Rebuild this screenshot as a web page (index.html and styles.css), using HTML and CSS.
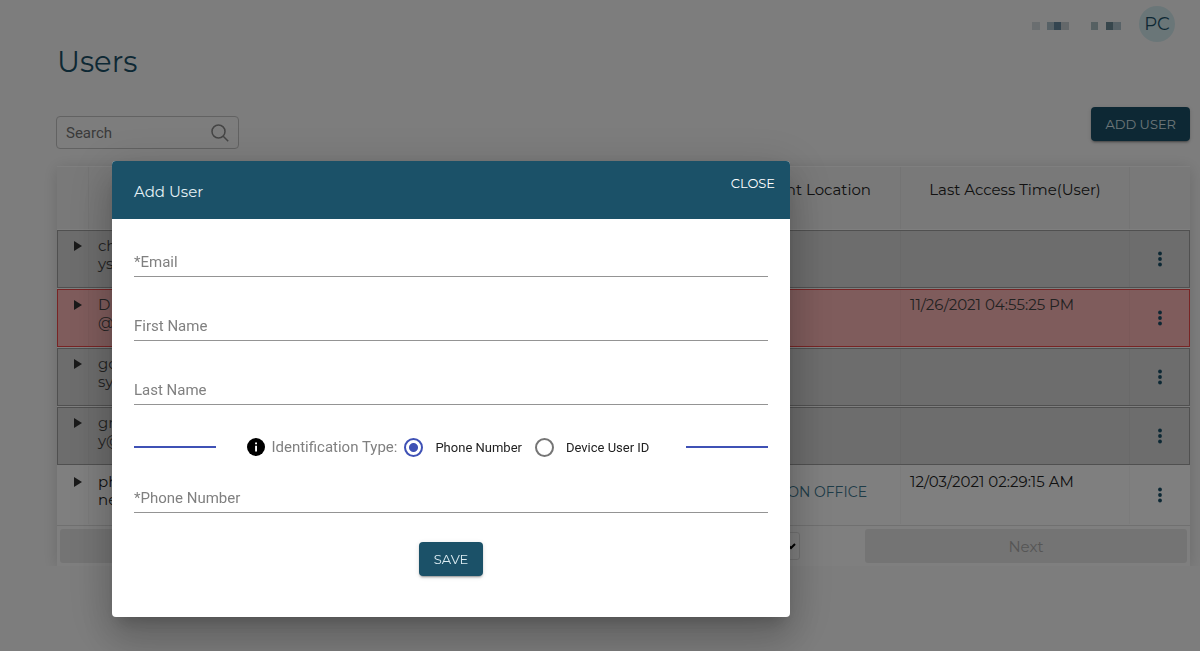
FILE: index.html
```
<!DOCTYPE html>
<html lang="en">
<head>
<meta charset="utf-8">
<title>Users</title>
<link rel="stylesheet" href="styles.css">
</head>
<body>

<div class="page">
  <div class="topbar">
    <svg class="username" width="89" height="8" viewBox="0 0 89 8">
      <rect x="0" width="8" height="8" fill="#d4dce0"/>
      <rect x="15" width="7" height="8" fill="#aec2cc"/>
      <rect x="22" width="7" height="8" fill="#688aa0"/>
      <rect x="29" width="8" height="8" fill="#c8d0d4"/>
      <rect x="59" width="7" height="8" fill="#acc0c4"/>
      <rect x="74" width="7" height="8" fill="#6e8c98"/>
      <rect x="81" width="8" height="8" fill="#b0c4ce"/>
    </svg>
    <span class="avatar">PC</span>
  </div>

  <h1>Users</h1>

  <div class="toolbar">
    <div class="search">
      <input type="text" placeholder="Search" aria-label="Search">
      <svg width="18" height="18" viewBox="0 0 18 18" fill="none" stroke="#8a8a8a" stroke-width="1.5">
        <circle cx="7.5" cy="7.5" r="6.5"/>
        <path d="M12.2 12.2L17.2 17.2"/>
      </svg>
    </div>
    <button class="btn">ADD USER</button>
  </div>

  <div class="grid">
    <table>
      <thead>
        <tr>
          <th class="col-expand"></th>
          <th class="col-email"></th>
          <th class="col-location">nt Location</th>
          <th class="col-time">Last Access Time(User)</th>
          <th class="col-menu"></th>
        </tr>
      </thead>
      <tbody>
        <tr class="inactive">
          <td><span class="arrow"></span></td>
          <td>ch<br>ys</td>
          <td></td>
          <td></td>
          <td class="menu"><button aria-label="Actions"><svg width="4" height="16" viewBox="0 0 4 16"><circle cx="2" cy="2.5" r="1.9"/><circle cx="2" cy="8" r="1.9"/><circle cx="2" cy="13.5" r="1.9"/></svg></button></td>
        </tr>
        <tr class="inactive locked">
          <td><span class="arrow"></span></td>
          <td>D<br>@</td>
          <td></td>
          <td>11/26/2021 04:55:25 PM</td>
          <td class="menu"><button aria-label="Actions"><svg width="4" height="16" viewBox="0 0 4 16"><circle cx="2" cy="2.5" r="1.9"/><circle cx="2" cy="8" r="1.9"/><circle cx="2" cy="13.5" r="1.9"/></svg></button></td>
        </tr>
        <tr class="inactive">
          <td><span class="arrow"></span></td>
          <td>go<br>sy</td>
          <td></td>
          <td></td>
          <td class="menu"><button aria-label="Actions"><svg width="4" height="16" viewBox="0 0 4 16"><circle cx="2" cy="2.5" r="1.9"/><circle cx="2" cy="8" r="1.9"/><circle cx="2" cy="13.5" r="1.9"/></svg></button></td>
        </tr>
        <tr class="inactive">
          <td><span class="arrow"></span></td>
          <td>gr<br>y@</td>
          <td></td>
          <td></td>
          <td class="menu"><button aria-label="Actions"><svg width="4" height="16" viewBox="0 0 4 16"><circle cx="2" cy="2.5" r="1.9"/><circle cx="2" cy="8" r="1.9"/><circle cx="2" cy="13.5" r="1.9"/></svg></button></td>
        </tr>
        <tr>
          <td><span class="arrow"></span></td>
          <td>ph<br>ne</td>
          <td class="location"><a href="#">TON OFFICE</a></td>
          <td>12/03/2021 02:29:15 AM</td>
          <td class="menu"><button aria-label="Actions"><svg width="4" height="16" viewBox="0 0 4 16"><circle cx="2" cy="2.5" r="1.9"/><circle cx="2" cy="8" r="1.9"/><circle cx="2" cy="13.5" r="1.9"/></svg></button></td>
        </tr>
      </tbody>
    </table>
    <div class="pagination">
      <button disabled>Previous</button>
      <div class="page-size">
        <select aria-label="Rows per page">
          <option>5 rows</option>
        </select>
      </div>
      <button disabled>Next</button>
    </div>
  </div>
</div>

<!-- The Modal -->
<div class="overlay">
  <div class="modal" role="dialog" aria-labelledby="modal-title">
    <div class="modal-header">
      <h2 id="modal-title">Add User</h2>
      <button class="close">CLOSE</button>
    </div>
    <form class="modal-body">
      <input class="field" type="email" placeholder="*Email" aria-label="Email">
      <input class="field" type="text" placeholder="First Name" aria-label="First Name">
      <input class="field" type="text" placeholder="Last Name" aria-label="Last Name">

      <div class="id-type">
        <span class="rule"></span>
        <div class="options" role="radiogroup" aria-labelledby="id-type-label">
          <svg class="info" width="18" height="18" viewBox="0 0 18 18">
            <circle cx="9" cy="9" r="9"/>
            <path d="M8.1 4.4h1.9v1.9H8.1zM8.1 7.7h1.9v5.8H8.1z" fill="#fff"/>
          </svg>
          <span class="caption" id="id-type-label">Identification Type:</span>
          <label><input type="radio" name="idtype" checked>Phone Number</label>
          <label><input type="radio" name="idtype">Device User ID</label>
        </div>
        <span class="rule"></span>
      </div>

      <input class="field" type="tel" placeholder="*Phone Number" aria-label="Phone Number">
      <button class="btn save" type="button">SAVE</button>
    </form>
  </div>
</div>

</body>
</html>
```
FILE: styles.css
```
* {box-sizing: border-box;}

body {
    margin: 0;
    background: #fbfbfb;
    color: #222;
    font-family: Montserrat, Inter, sans-serif;
    font-size: 15px;
    overflow: hidden;
}

button, input, select {font-family: inherit;}

.page {padding: 6px 10px 0 57px;}

.topbar {
    display: flex;
    justify-content: flex-end;
    align-items: center;
    gap: 18px;
    padding-right: 15px;
}

.username {margin-top: 3px;}

.avatar {
    width: 36px;
    height: 36px;
    border-radius: 50%;
    background: #d5ecf0;
    color: #1b5168;
    font-size: 18px;
    line-height: 36px;
    text-align: center;
}

h1 {
    margin: 0;
    color: #1b5168;
    font-size: 29px;
    font-weight: 400;
    line-height: 40px;
}

.toolbar {
    display: flex;
    justify-content: space-between;
    align-items: flex-start;
    padding-top: 25px;
}

.search {
    display: flex;
    align-items: center;
    width: 183px;
    height: 33px;
    margin-top: 9px;
    margin-left: -1px;
    padding: 0 9px;
    border: 1px solid #c4c4c4;
    border-radius: 4px;
}

.search input {
    flex: 1;
    min-width: 0;
    padding: 0;
    border: 0;
    outline: 0;
    background: none;
    font-family: Roboto, sans-serif;
    font-size: 15px;
}

.search input::placeholder {color: #757575;}

.btn {
    height: 34px;
    min-width: 64px;
    padding: 0 14px;
    border: 0;
    border-radius: 4px;
    background: #1b5168;
    color: #dcecf2;
    font-size: 13px;
    box-shadow: 0 3px 1px -2px rgba(0,0,0,0.2), 0 2px 2px 0 rgba(0,0,0,0.14), 0 1px 5px 0 rgba(0,0,0,0.12);
}

/* Users table */
.grid {
    margin-top: 17px;
    background: #fff;
    box-shadow: 0 2px 15px 0 rgba(0,0,0,0.15);
}

table {
    width: 100%;
    table-layout: fixed;
    border-collapse: separate;
    border-spacing: 0 1px;
}

.col-expand {width: 32px;}
.col-location {width: 188px;}
.col-time {width: 229px;}
.col-menu {width: 60px;}

th {
    height: 62px;
    padding: 14px 5px;
    background: #f2f2f2;
    border-right: 1px solid #e8e8e8;
    font-weight: 400;
    line-height: 18px;
    vertical-align: top;
}

th.col-location {
    padding-right: 29px;
    text-align: right;
}

td {
    height: 58px;
    padding: 7px 9px;
    border-right: 1px solid rgba(0,0,0,0.03);
    line-height: 18px;
    vertical-align: top;
    color: #222;
}

td:last-child, th:last-child {border-right: 0;}

.inactive {
    background: #dadada;
    outline: 1px solid #a0a0a0;
    outline-offset: -1px;
}

.inactive td {color: #444;}

.locked {
    background: #ffb8b8;
    outline-color: #f04848;
}

.arrow {
    display: block;
    margin: 4px 0 0 8px;
    border-left: 8px solid #333;
    border-top: 5px solid transparent;
    border-bottom: 5px solid transparent;
    width: 0;
}

td.location {
    padding: 17px 33px 0 0;
    text-align: right;
    font-size: 14px;
}

td a {
    color: #3c7890;
    text-decoration: none;
}

td.menu {
    padding: 3px 0 0;
    text-align: center;
    vertical-align: middle;
}

.menu button {
    padding: 0;
    border: 0;
    background: none;
    fill: #1b5168;
}

.menu svg {display: block;}

.pagination {
    display: flex;
    padding: 3px;
    border-top: 1px solid #e0e0e0;
}

.pagination > button {
    flex: 1;
    height: 34px;
    padding: 0;
    border: 0;
    border-radius: 3px;
    background: #e9e9e9;
    color: #acacac;
    font-size: 15px;
}

.page-size {
    flex: 1.5;
    display: flex;
    justify-content: flex-end;
    align-items: center;
}

.page-size select {
    height: 28px;
    width: 90px;
    margin-right: 65px;
    border: 1px solid #e2e2e2;
    border-radius: 3px;
    background: #fff;
    font-size: 14px;
}

/* The Modal (background) */
.overlay {
    position: fixed;
    top: 0;
    left: 0;
    width: 100%;
    height: 100%;
    padding: 161px 16px 0 112px;
    background: rgba(0,0,0,0.5);
}

.modal {
    width: 100%;
    max-width: 678px;
    border-radius: 4px;
    background: #fff;
    overflow: hidden;
    box-shadow: 0 11px 15px -7px rgba(0,0,0,0.2), 0 24px 38px 3px rgba(0,0,0,0.14), 0 9px 46px 8px rgba(0,0,0,0.12);
}

.modal-header {
    display: flex;
    justify-content: space-between;
    align-items: flex-start;
    padding: 12px 15px 16px 22px;
    background: #1b5168;
    color: #e4f0f5;
}

.modal-header h2 {
    margin: 8px 0 0;
    font-size: 15px;
    font-weight: 400;
    line-height: 22px;
}

.close {
    padding: 0;
    border: 0;
    background: none;
    color: #fff;
    font-size: 13px;
    line-height: 20px;
}

.modal-body {
    display: flex;
    flex-direction: column;
    padding: 29px 22px 41px;
    font-family: Roboto, sans-serif;
}

.field {
    height: 29px;
    margin-bottom: 35px;
    padding: 0;
    border: 0;
    border-bottom: 1px solid #949494;
    border-radius: 0;
    outline: 0;
    font-size: 15px;
}

.field::placeholder {color: #808080;}

.id-type {
    display: flex;
    align-items: center;
    height: 22px;
    margin: -4px 0 26px;
}

.rule {
    width: 13%;
    height: 2px;
    background: #3f51b5;
}

.options {
    flex: 1;
    display: flex;
    align-items: center;
    padding-left: 31px;
    white-space: nowrap;
}

.caption {
    margin: 0 7px 0 6px;
    color: #808080;
    font-size: 15px;
}

.options label {
    display: flex;
    align-items: center;
    gap: 12px;
    margin-right: 13px;
    color: #222;
    font-size: 13px;
}

/* Material style radio */
.options input {
    appearance: none;
    width: 19px;
    height: 19px;
    margin: 0;
    border: 2px solid #757575;
    border-radius: 50%;
}

.options input:checked {
    border-color: #3f51b5;
    background: radial-gradient(circle, #3f51b5 4px, transparent 5px);
}

.save {
    align-self: center;
    margin-top: -6px;
    font-family: Montserrat, Inter, sans-serif;
}
```
